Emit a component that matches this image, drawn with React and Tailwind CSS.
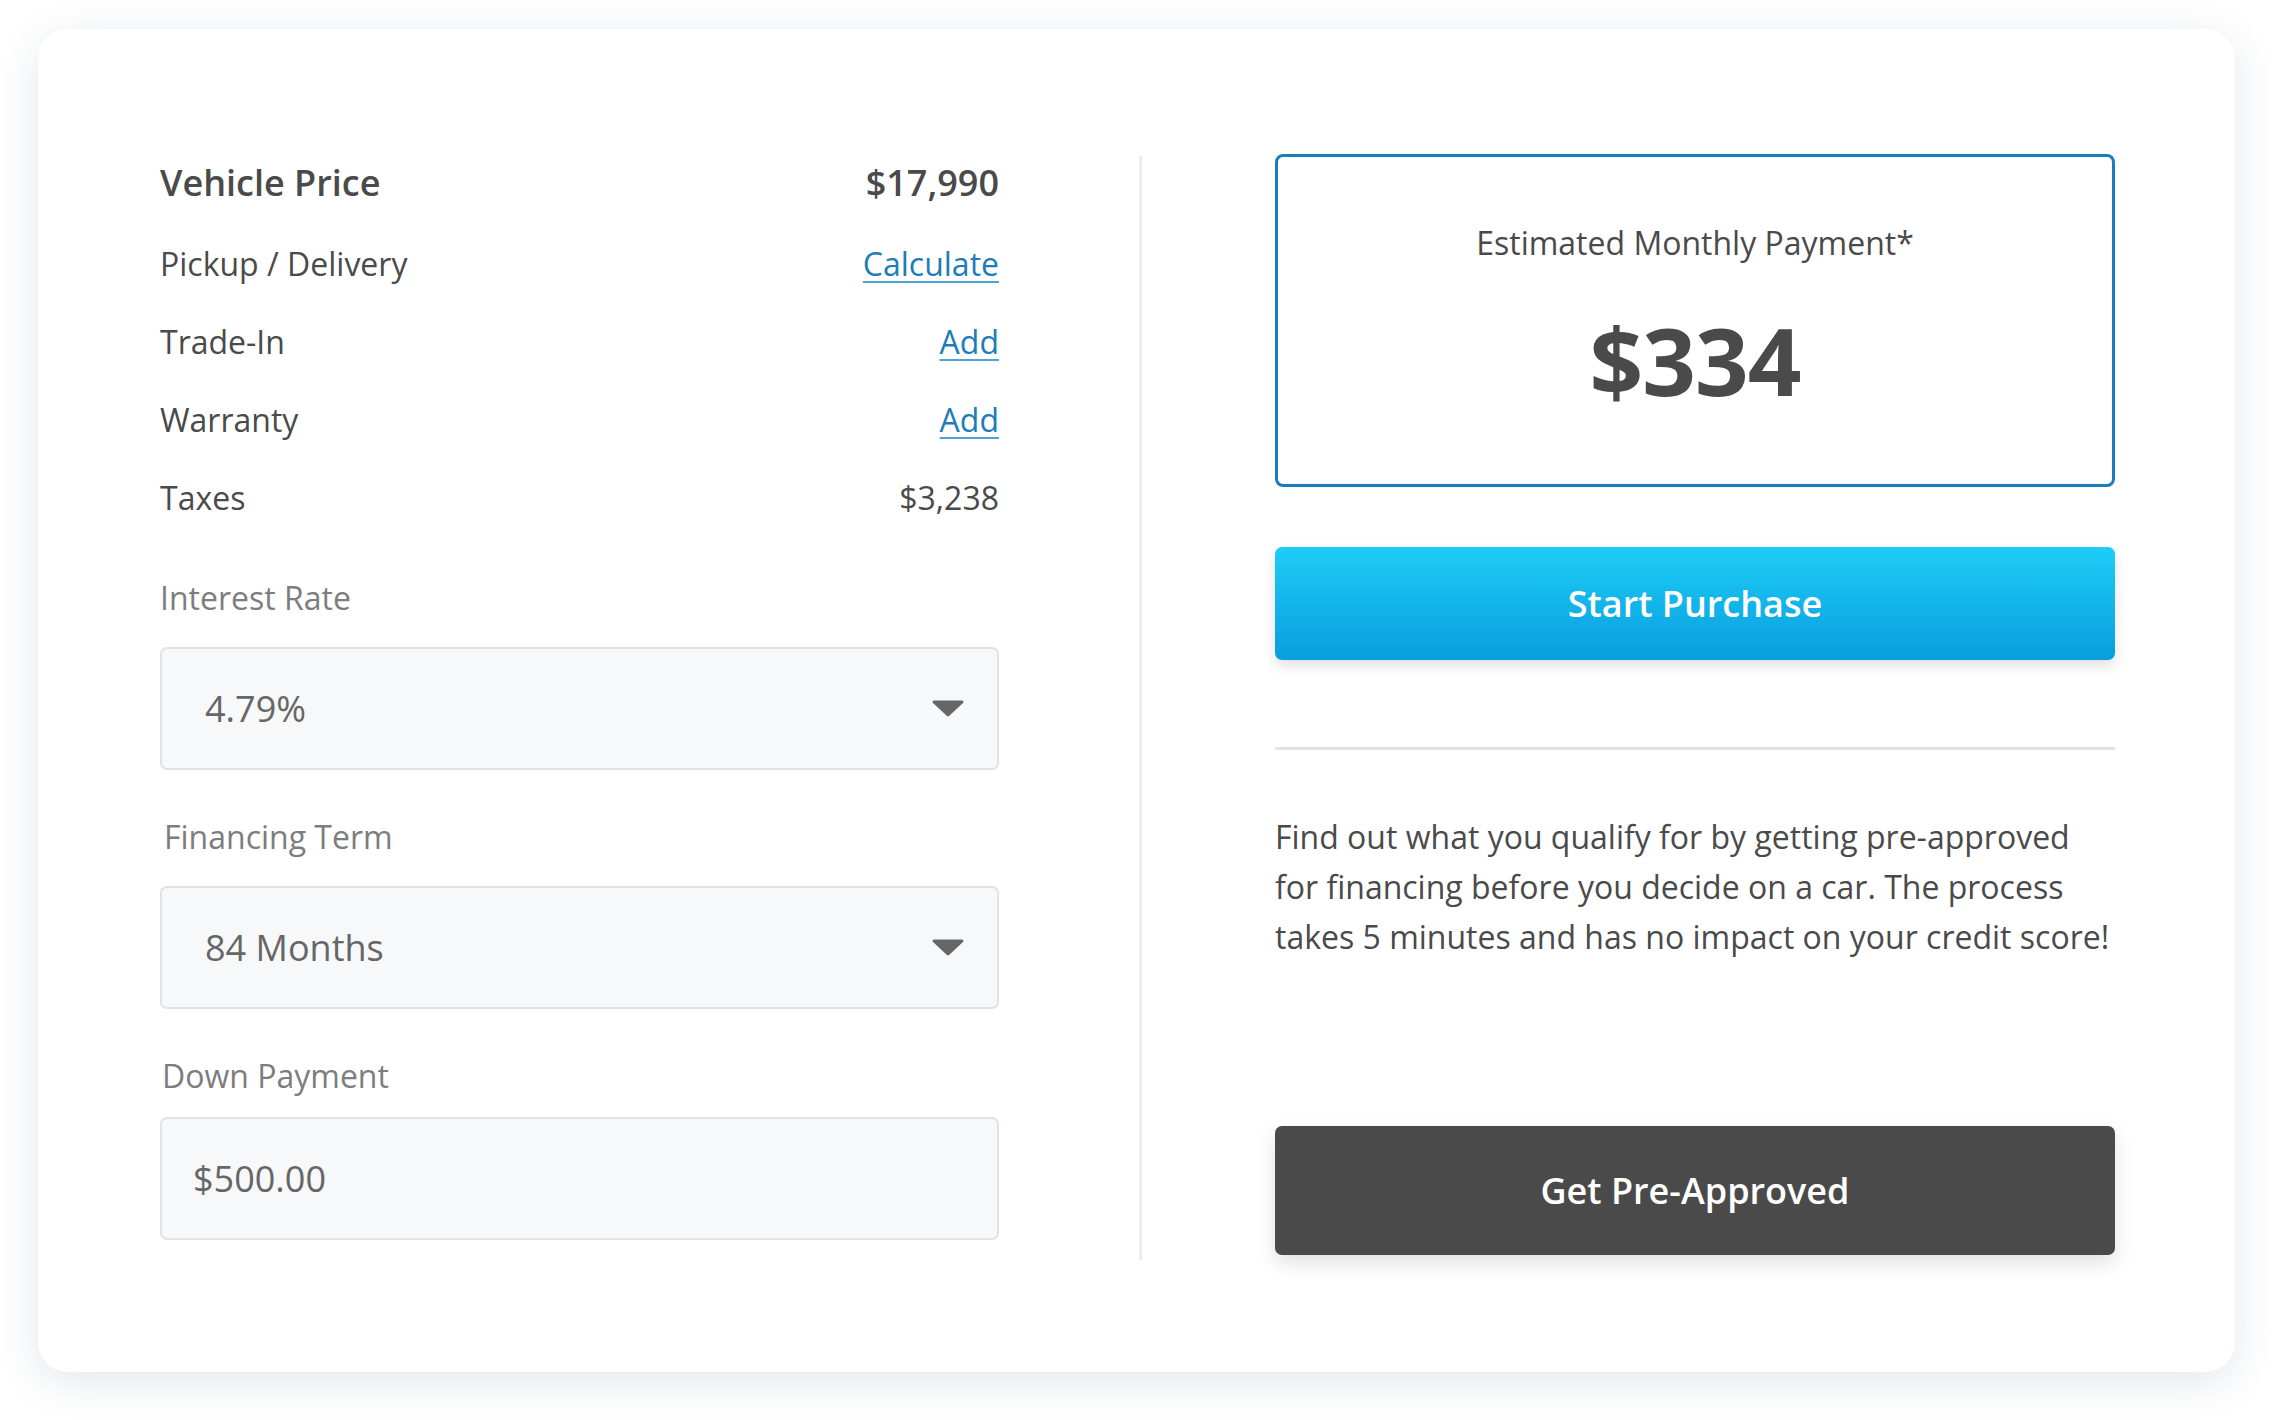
import React from "react";

const Arrow = () => (
  <svg width="34" height="19" viewBox="0 0 34 19" className="shrink-0">
    <path d="M3 3 L31 3 L17 16 Z" fill="#666666" stroke="#666666" strokeWidth="3" strokeLinejoin="round" />
  </svg>
);

const Row = ({ label, children }) => (
  <div className="flex h-[78px] items-center justify-between text-[32px] text-[#4a4a4a]">
    <span>{label}</span>
    {children}
  </div>
);

const Link = ({ children }) => (
  <a href="#" className="text-[#1d7db9] underline decoration-[#4ea5d9] decoration-[2px] underline-offset-[5px]">
    {children}
  </a>
);

export default function App() {
  return (
    <div className="min-h-[1420px] bg-white pt-[29px] pl-[38px]" style={{ fontFamily: '"Open Sans", "Noto Sans", sans-serif' }}>
      <div className="w-[2197px] h-[1343px] rounded-[30px] bg-white shadow-[0_10px_40px_rgba(40,60,100,0.13)] pt-[125px] pl-[122px] pr-[120px]">
        <div className="flex h-[1106px]">
          {/* Left column */}
          <div className="w-[839px] flex flex-col">
            <div className="flex h-[58px] items-center justify-between text-[36px] font-semibold text-[#4a4a4a]">
              <span>Vehicle Price</span>
              <span>$17,990</span>
            </div>
            <div className="mt-[13px]">
              <Row label="Pickup / Delivery"><Link>Calculate</Link></Row>
              <Row label="Trade-In"><Link>Add</Link></Row>
              <Row label="Warranty"><Link>Add</Link></Row>
              <Row label="Taxes"><span>$3,238</span></Row>
            </div>

            <div className="mt-[41px] h-[40px] flex items-center text-[32px] text-[#7d7d7d]">Interest Rate</div>
            <div className="mt-[29px] h-[123px] rounded-[7px] border-2 border-[#e2e2e2] bg-[#f7f8fa] flex items-center justify-between pl-[43px] pr-[32px] text-[36px] text-[#666666]">
              <span>4.79%</span>
              <Arrow />
            </div>

            <div className="mt-[47px] h-[40px] flex items-center pl-[4px] text-[32px] text-[#7d7d7d]">Financing Term</div>
            <div className="mt-[29px] h-[123px] rounded-[7px] border-2 border-[#e2e2e2] bg-[#f7f8fa] flex items-center justify-between pl-[43px] pr-[32px] text-[36px] text-[#666666]">
              <span>84 Months</span>
              <Arrow />
            </div>

            <div className="mt-[47px] h-[40px] flex items-center pl-[2px] text-[32px] text-[#7d7d7d]">Down Payment</div>
            <div className="mt-[21px] h-[123px] rounded-[7px] border-2 border-[#e2e2e2] bg-[#f7f8fa] flex items-center pl-[31px] text-[36px] text-[#666666]">
              <span>$500.00</span>
            </div>
          </div>

          {/* Divider */}
          <div className="ml-[140px] mt-[2px] w-[3px] bg-[#ececec]" />

          {/* Right column */}
          <div className="ml-[133px] w-[840px] flex flex-col pb-[5px]">
            <div className="h-[333px] rounded-[8px] border-[3px] border-[#1a7fb8] flex flex-col items-center">
              <div className="mt-[62px] h-[48px] flex items-center text-[32px] text-[#4a4a4a]">Estimated Monthly Payment*</div>
              <div className="mt-[38px] h-[110px] flex items-center text-[94px] font-bold text-[#4a4a4a] tracking-[-1px]">$334</div>
            </div>

            <button className="mt-[60px] h-[113px] rounded-[7px] bg-gradient-to-b from-[#1ecdf6] to-[#0a9ddf] text-white text-[36px] font-semibold shadow-[0_6px_14px_rgba(0,0,0,0.12)]">
              Start Purchase
            </button>

            <div className="mt-[87px] h-[3px] bg-[#e3e3e3]" />

            <p className="mt-[62px] text-[32px] leading-[50px] text-[#4a4a4a] whitespace-nowrap">
              Find out what you qualify for by getting pre-approved
              <br />
              for financing before you decide on a car. The process
              <br />
              takes 5 minutes and has no impact on your credit score!
            </p>

            <button className="mt-auto h-[129px] rounded-[7px] bg-[#4a4a4a] text-white text-[36px] font-semibold shadow-[0_8px_20px_rgba(0,0,0,0.12)]">
              Get Pre-Approved
            </button>
          </div>
        </div>
      </div>
    </div>
  );
}
